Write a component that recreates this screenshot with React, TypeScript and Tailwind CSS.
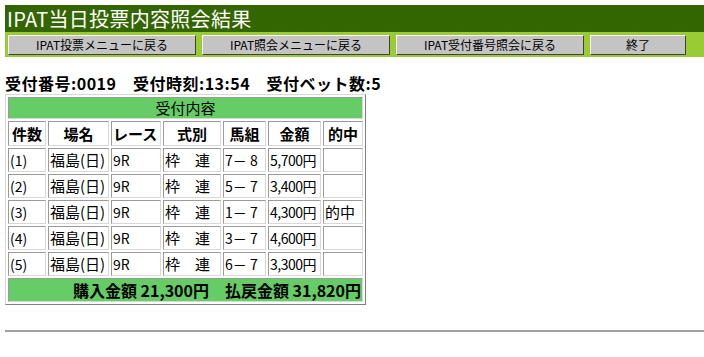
const rows = [
  { n: "(1)", kumi: "7－ 8", amt: "5,700円", hit: "" },
  { n: "(2)", kumi: "5－ 7", amt: "3,400円", hit: "" },
  { n: "(3)", kumi: "1－ 7", amt: "4,300円", hit: "的中" },
  { n: "(4)", kumi: "3－ 7", amt: "4,600円", hit: "" },
  { n: "(5)", kumi: "6－ 7", amt: "3,300円", hit: "" },
];

const buttons = [
  { label: "IPAT投票メニューに戻る", w: "w-[188px]" },
  { label: "IPAT照会メニューに戻る", w: "w-[188px]" },
  { label: "IPAT受付番号照会に戻る", w: "w-[188px]" },
  { label: "終了", w: "w-[96px]" },
];

const cell = "border border-t-[#9a9a9a] border-l-[#9a9a9a] border-r-[#d8d8d8] border-b-[#d8d8d8] px-[1px]";

export default function App() {
  return (
    <div className="w-[704px] h-[357px] bg-white font-['Noto_Sans_CJK_JP','Noto_Sans',sans-serif] text-black overflow-hidden">
      <div className="pt-[5px] pl-[5px]">
        <div className="bg-[#336600] h-[27px] pl-[2px] text-white text-[20px] leading-[27px] tracking-[0.3px]">
          IPAT当日投票内容照会結果
        </div>
        <div className="bg-[#99cc33] h-[25px] flex items-center gap-[6px] pl-[3px]">
          {buttons.map((b) => (
            <div
              key={b.label}
              className={`${b.w} h-[20px] bg-[#c4c4c4] border border-t-white border-l-white border-r-[#404040] border-b-[#404040] text-[12px] leading-[18px] text-center`}
            >
              {b.label}
            </div>
          ))}
        </div>
      </div>

      <div className="pl-[5px] mt-[16px] text-[16px] font-bold leading-[20px] tracking-[0.5px] whitespace-pre">
        受付番号:0019　受付時刻:13:54　受付ベット数:5
      </div>

      <div className="pl-[5px] mt-[1px]">
        <table className="border-separate border-spacing-[2px] border border-t-[#d8d8d8] border-l-[#d8d8d8] border-r-[#808080] border-b-[#808080] text-[15px] leading-[20px]">
          <tbody>
            <tr className="h-[22px]">
              <td colSpan={7} className={`${cell} bg-[#66cc66] text-center`}>受付内容</td>
            </tr>
            <tr className="font-bold h-[25px]">
              <td className={`${cell} w-[38px] text-center`}>件数</td>
              <td className={`${cell} w-[61px] text-center`}>場名</td>
              <td className={`${cell} w-[50px] text-left`}>レース</td>
              <td className={`${cell} w-[58px] text-center`}>式別</td>
              <td className={`${cell} w-[43px] text-center`}>馬組</td>
              <td className={`${cell} w-[53px] text-center`}>金額</td>
              <td className={`${cell} w-[40px] text-center`}>的中</td>
            </tr>
            {rows.map((r) => (
              <tr key={r.n} className="h-[24px]">
                <td className={`${cell} text-[14px]`}>{r.n}</td>
                <td className={cell}>福島(日)</td>
                <td className={`${cell} text-[14px]`}>9R</td>
                <td className={`${cell} whitespace-pre`}>枠　連</td>
                <td className={`${cell} text-[14px] whitespace-pre`}>{r.kumi}</td>
                <td className={`${cell} text-[14px] tracking-[-0.5px]`}>{r.amt}</td>
                <td className={cell}>{r.hit}</td>
              </tr>
            ))}
            <tr className="h-[24px]">
              <td colSpan={7} className={`${cell} bg-[#66cc66] text-right font-bold text-[16px] whitespace-pre`}>
                購入金額 21,300円　払戻金額 31,820円
              </td>
            </tr>
          </tbody>
        </table>
      </div>

      <div className="ml-[5px] mt-[25px] border-t-2 border-[#a0a0a0]" />
    </div>
  );
}
